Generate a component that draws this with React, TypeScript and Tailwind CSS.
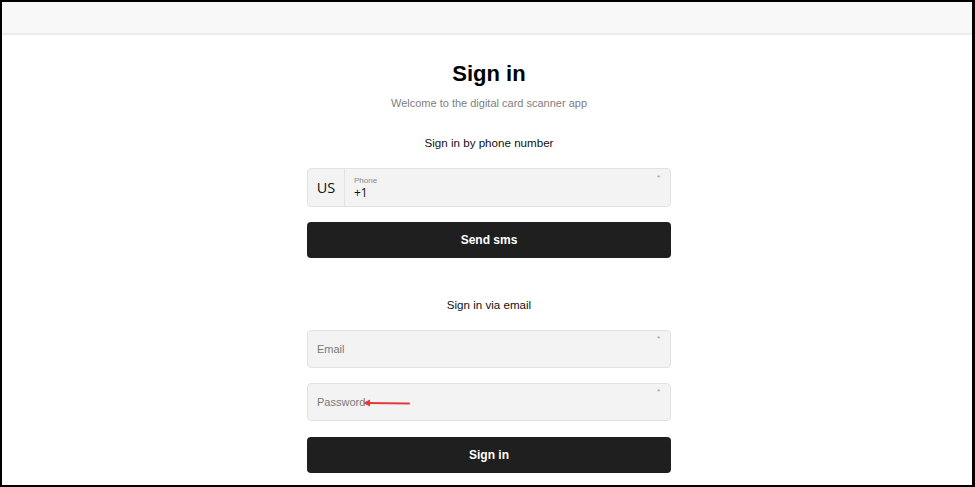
export default function App() {
  return (
    <div
      className="relative h-[487px] w-[975px] overflow-hidden border-t-2 border-l-2 border-b-2 border-r-[3px] border-black bg-white"
      style={{ fontFamily: '"Liberation Sans", Arial, sans-serif' }}
    >
      {/* Top bar */}
      <div className="h-[33px] border-b-2 border-[#ececec] bg-[#f8f8f8]" />

      <div className="flex flex-col items-center pl-[4px] pt-[24px]">
        <h1 className="mt-[1px] text-[22px] font-bold leading-[28px] text-black">Sign in</h1>
        <p className="mt-[7px] text-[11px] leading-[16px] text-[#808080]">
          Welcome to the digital card scanner app
        </p>

        <p className="mt-6 text-[11.6px] leading-[16px] text-[#111]">Sign in by phone number</p>

        {/* Phone field */}
        <div className="mt-[17px] flex h-[39px] w-[364px] overflow-hidden rounded-[4px] border border-[#e2e2e2] bg-[#f3f3f3]">
          <div
            className="flex w-[37px] items-center justify-center border-r border-[#e2e2e2] text-[14.5px] text-[#111]"
            style={{ fontFamily: '"Open Sans", "Noto Sans", sans-serif' }}
          >
            US
          </div>
          <div className="relative flex-1 pl-[9px] pt-[7px]">
            <div className="text-[8px] leading-[10px] text-[#8a8a8a]">Phone</div>
            <div
              className="text-[12px] leading-[14px] text-[#111]"
              style={{ fontFamily: '"Open Sans", "Noto Sans", sans-serif' }}
            >
              +1
            </div>
            <span className="absolute right-[10px] top-[3px] text-[8px] text-[#999]">*</span>
          </div>
        </div>

        <button className="mt-[15px] h-[36px] w-[364px] rounded-[4px] bg-[#1f1f1f] text-[12px] font-bold text-white">
          Send sms
        </button>

        <p className="mt-[39px] text-[11.6px] leading-[16px] text-[#111]">Sign in via email</p>

        {/* Email field */}
        <div className="relative mt-[17px] flex h-[38px] w-[364px] items-center rounded-[4px] border border-[#e2e2e2] bg-[#f3f3f3] pl-[9px]">
          <span className="text-[11px] text-[#7a7a7a]">Email</span>
          <span className="absolute right-[10px] top-[2px] text-[8px] text-[#999]">*</span>
        </div>

        {/* Password field */}
        <div className="relative mt-[15px] flex h-[38px] w-[364px] items-center rounded-[4px] border border-[#e2e2e2] bg-[#f3f3f3] pl-[9px]">
          <span className="text-[11px] text-[#7a7a7a]">Password</span>
          <span className="absolute right-[10px] top-[2px] text-[8px] text-[#999]">*</span>
          {/* annotation arrow */}
          <svg className="absolute left-[54px] top-[14px]" width="50" height="10" viewBox="0 0 50 10">
            <line x1="6" y1="5" x2="47" y2="5.5" stroke="#e23b3b" strokeWidth="2" strokeLinecap="round" />
            <path d="M1 5 L8 1.5 L8 8.5 Z" fill="#e23b3b" />
          </svg>
        </div>

        <button className="mt-4 h-[36px] w-[364px] rounded-[4px] bg-[#1f1f1f] text-[12px] font-bold text-white">
          Sign in
        </button>
      </div>
    </div>
  )
}
